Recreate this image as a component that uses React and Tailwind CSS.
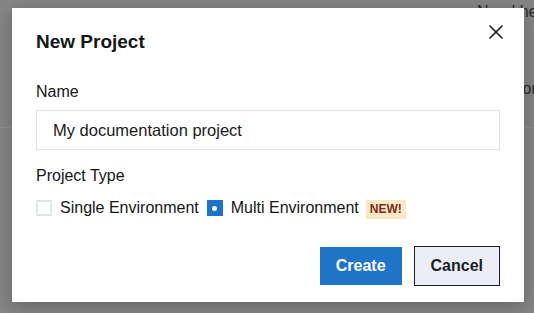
import React, { useState } from "react";
import { X } from "lucide-react";

function Checkbox({ checked, onClick }) {
  return checked ? (
    <button
      onClick={onClick}
      className="w-4 h-4 bg-[#1f73c6] flex items-center justify-center shrink-0"
    >
      <span className="w-[5px] h-[5px] rounded-full bg-white" />
    </button>
  ) : (
    <button
      onClick={onClick}
      className="w-4 h-4 border-2 border-[#dfe4ed] bg-white shrink-0"
    />
  );
}

export default function App() {
  const [name, setName] = useState("My documentation project");
  const [type, setType] = useState("multi"); // single | multi

  return (
    <div
      className="relative w-[534px] h-[313px] overflow-hidden bg-[#858585] text-[#2a2a2a]"
      style={{ fontFamily: '"Liberation Sans", Arial, sans-serif' }}
    >
      {/* Page behind the dialog */}
      <div className="h-[128px] border-b border-[#8e8e8e]">
        <div className="pl-[477px] pt-[2px] text-[16px] leading-[20px] whitespace-nowrap">
          Need help?
        </div>
        <div className="pl-[495px] pt-[57px] text-[16px] leading-[20px] whitespace-nowrap">
          Editor
        </div>
      </div>

      {/* Dialog overlay */}
      <div className="absolute inset-0 pl-[12px] pt-[8px]">
        <div className="relative w-[512px] h-[294px] bg-white shadow-[0_4px_16px_rgba(0,0,0,0.25)] px-6 pt-5 pb-4 flex flex-col text-[#161616]">
          <button className="absolute right-[16px] top-[12px] text-[#1a1a1a]">
            <X size={24} strokeWidth={1.6} />
          </button>

          <h2 className="text-[19px] leading-[28px] font-bold">New Project</h2>

          <label className="mt-6 text-[16px] leading-6 font-medium">Name</label>
          <input
            value={name}
            onChange={(e) => setName(e.target.value)}
            className="mt-[6px] h-10 w-full border border-[#dde2eb] px-4 text-[16.5px] text-[#1a1a1a] outline-none"
          />

          <div className="mt-[14px] text-[16px] leading-6 font-medium">Project Type</div>
          <div className="mt-2 flex items-center h-6 text-[16px]">
            <Checkbox checked={type === "single"} onClick={() => setType("single")} />
            <span className="ml-2">Single Environment</span>
            <span className="ml-2" />
            <Checkbox checked={type === "multi"} onClick={() => setType("multi")} />
            <span className="ml-2">Multi Environment</span>
            <span className="ml-[7px] mt-[3px] h-[19px] px-1 bg-[#fde8c6] text-[#7a2c18] text-[12px] leading-[19px] font-bold">
              NEW!
            </span>
          </div>

          <div className="mt-auto flex items-center justify-end gap-3">
            <button className="h-[38px] px-4 bg-[#1f74c7] text-white text-[16px] font-bold">
              Create
            </button>
            <button className="h-10 px-4 bg-[#ebeef6] border border-[#1b1f2a] text-[#1b1f2a] text-[16px] font-bold">
              Cancel
            </button>
          </div>
        </div>
      </div>
    </div>
  );
}
